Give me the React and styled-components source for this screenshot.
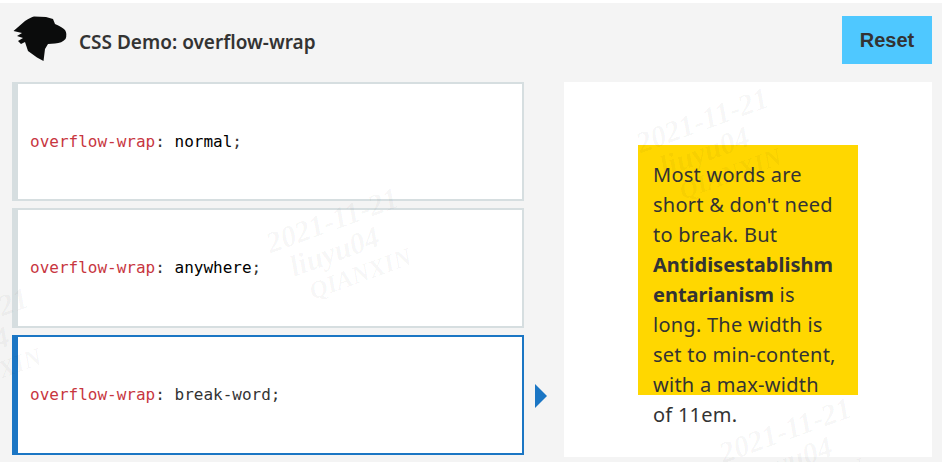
import React from 'react'
import styled, { createGlobalStyle } from 'styled-components'

const GlobalStyle = createGlobalStyle`
  html, body { margin: 0; padding: 0; background: #fff; }
  #root { width: 942px; height: 462px; overflow: hidden; }
`

const Page = styled.div`
  position: relative;
  width: 942px;
  height: 462px;
  box-sizing: border-box;
  padding-top: 3px;
  overflow: hidden;
`

const Panel = styled.div`
  height: 459px;
  background: #f4f4f4;
`

const Header = styled.header`
  display: flex;
  align-items: center;
  height: 79px;
  padding: 0 10px 0 13px;
  box-sizing: border-box;
`

const Logo = styled.svg`
  width: 56px;
  height: 50px;
  margin-top: -5px;
  flex: none;
`

const Title = styled.h1`
  flex: 1;
  margin: -2px 0 0 10px;
  font: 600 19px/24px "Noto Sans", sans-serif;
  color: #333;
`

const ResetButton = styled.button`
  width: 90px;
  height: 48px;
  margin-top: -5px;
  border: 0;
  padding: 0;
  background: #4fc8ff;
  color: #333;
  font: 700 20px "Liberation Sans", Arial, sans-serif;
`

const Main = styled.main`
  display: grid;
  grid-template-columns: 512px 40px 368px;
  padding-left: 12px;
`

const Choices = styled.div`
  display: flex;
  flex-direction: column;
  gap: 7px;
  height: 373px;
`

const Choice = styled.div`
  flex: 1;
  display: flex;
  align-items: center;
  box-sizing: border-box;
  padding-left: 12px;
  background: #fff;
  border: 2px solid ${p => (p.$active ? '#1b76c4' : '#d6dee0')};
  border-left-width: 6px;

  &:first-child { flex: 0 0 119px; }
`

const Code = styled.code`
  font: 16px/24px "DejaVu Sans Mono", monospace;
  color: #333;
`

const Prop = styled.span`
  color: #c8363f;
`

const Value = styled.span`
  color: ${p => (p.$active ? '#333' : '#000')};
`

const ArrowCell = styled.div`
  display: flex;
  align-items: flex-end;
  padding: 0 0 49px 11px;
`

const Arrow = styled.div`
  width: 0;
  height: 0;
  border-style: solid;
  border-width: 12px 0 12px 12px;
  border-color: transparent transparent transparent #1b76c4;
`

const Output = styled.section`
  display: flex;
  align-items: center;
  justify-content: center;
  height: 375px;
  background: #fff;
`

const Example = styled.div`
  width: 220px;
  height: 250px;
  box-sizing: border-box;
  padding: 15px;
  background: gold;
  color: #333;
  font: 20px/30px "Noto Sans", sans-serif;
  letter-spacing: 0.25px;
  overflow-wrap: break-word;
  strong { font-weight: 700; letter-spacing: 0; }
`

const Stamp = styled.div`
  position: absolute;
  left: ${p => p.$x}px;
  top: ${p => p.$y}px;
  transform: rotate(-20deg);
  transform-origin: 0 0;
  pointer-events: none;
  font: italic 700 30px/30px "Liberation Serif", serif;
  color: rgba(0, 0, 0, 0.04);
  white-space: nowrap;
`

const StampLine = styled.div`
  padding-left: ${p => p.$indent || 0}px;
  font-size: ${p => p.$size || 30}px;
`

const stamps = [
  [262, 230],
  [632, 130],
  [715, 440],
  [-108, 330],
]

const choices = [
  { value: 'normal' },
  { value: 'anywhere' },
  { value: 'break-word', active: true },
]

function App() {
  return (
    <>
      <GlobalStyle />
      <Page>
        <Panel>
          <Header>
            <Logo viewBox="13 16 56 50">
              <path
                fill="#0b0c0c"
                d="M13.5 32 L25 22 Q31 18 34 17.5 L46 18 L53 20 L55 25 Q62 28 65 31 Q67.5 35 65.5 40 Q62 44 55 44.5 L48 45 L45 50 L43.5 62 L37 58.5 L28 52 L25 43 L21 45 L18 42 L23 39 L17 37 L22 34 Z"
              />
            </Logo>
            <Title>CSS Demo: overflow-wrap</Title>
            <ResetButton>Reset</ResetButton>
          </Header>
          <Main>
            <Choices>
              {choices.map(c => (
                <Choice key={c.value} $active={c.active}>
                  <Code>
                    <Prop>overflow-wrap</Prop>: <Value $active={c.active}>{c.value}</Value>;
                  </Code>
                </Choice>
              ))}
            </Choices>
            <ArrowCell>
              <Arrow />
            </ArrowCell>
            <Output>
              <Example>
                Most words are short &amp; don't need to break. But <strong>Antidisestablishmentarianism</strong> is long. The width is set to min-content, with a max-width of 11em.
              </Example>
            </Output>
          </Main>
        </Panel>
        {stamps.map(([x, y]) => (
          <Stamp key={x} $x={x} $y={y}>
            <StampLine>2021-11-21</StampLine>
            <StampLine $indent={14}>liuyu04</StampLine>
            <StampLine $indent={24} $size={25}>QIANXIN</StampLine>
          </Stamp>
        ))}
      </Page>
    </>
  )
}

export default App
